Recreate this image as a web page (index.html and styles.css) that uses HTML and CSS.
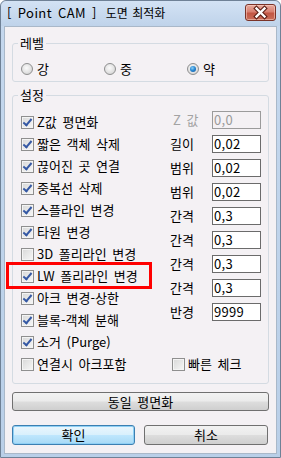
FILE: index.html
```html
<!DOCTYPE html>
<html lang="ko">
<head>
<meta charset="utf-8">
<title>도면 최적화</title>
<link rel="stylesheet" href="styles.css">
</head>
<body>
<div class="window">
  <div class="titlebar">
    <span class="title"><span class="app">[ Point CAM ]</span><span class="doc">도면 최적화</span></span>
    <span class="close">
      <svg width="31" height="17" viewBox="0 0 31 17">
        <path d="M11.5 4.5 L19.5 12.5 M19.5 4.5 L11.5 12.5" stroke="#5a1d14" stroke-width="4.5" stroke-linecap="square" fill="none"/>
        <path d="M11.5 4.5 L19.5 12.5 M19.5 4.5 L11.5 12.5" stroke="#ffffff" stroke-width="2.4" stroke-linecap="square" fill="none"/>
      </svg>
    </span>
  </div>
  <div class="client">
    <fieldset class="group level">
      <legend>레벨</legend>
      <div class="radios">
        <label class="opt"><span class="rb"></span>강</label>
        <label class="opt"><span class="rb"></span>중</label>
        <label class="opt"><span class="rb on"></span>약</label>
      </div>
    </fieldset>
    <fieldset class="group settings">
      <legend>설정</legend>
      <div class="cols">
        <div class="checks">
          <div class="opt"><span class="cb on"></span>Z값 평면화</div>
          <div class="opt"><span class="cb on"></span>짧은 객체 삭제</div>
          <div class="opt"><span class="cb on"></span>끊어진 곳 연결</div>
          <div class="opt"><span class="cb on"></span>중복선 삭제</div>
          <div class="opt"><span class="cb on"></span>스플라인 변경</div>
          <div class="opt"><span class="cb on"></span>타원 변경</div>
          <div class="opt"><span class="cb"></span>3D 폴리라인 변경</div>
          <div class="opt marked"><span class="cb on"></span>LW 폴리라인 변경<span class="highlight"></span></div>
          <div class="opt"><span class="cb on"></span>아크 변경-상한</div>
          <div class="opt"><span class="cb on"></span>블록-객체 분해</div>
          <div class="opt"><span class="cb on"></span>소거 (Purge)</div>
          <div class="opt"><span class="cb"></span>연결시 아크포함</div>
        </div>
        <div class="fields">
          <div class="field disabled"><span class="lbl">Z 값</span><span class="box">0,0</span></div>
          <div class="field"><span class="lbl">길이</span><span class="box">0,02</span></div>
          <div class="field"><span class="lbl">범위</span><span class="box">0,02</span></div>
          <div class="field"><span class="lbl">범위</span><span class="box">0,02</span></div>
          <div class="field"><span class="lbl">간격</span><span class="box">0,3</span></div>
          <div class="field"><span class="lbl">간격</span><span class="box">0,3</span></div>
          <div class="field"><span class="lbl">간격</span><span class="box">0,3</span></div>
          <div class="field"><span class="lbl">간격</span><span class="box">0,3</span></div>
          <div class="field"><span class="lbl">반경</span><span class="box">9999</span></div>
          <div class="opt quick"><span class="cb"></span>빠른 체크</div>
        </div>
      </div>
    </fieldset>
    <div class="btn wide">동일 평면화</div>
    <div class="actions">
      <div class="btn default">확인</div>
      <div class="btn">취소</div>
    </div>
  </div>
</div>
</body>
</html>
```
FILE: styles.css
```css
* { box-sizing: border-box; }
html, body { margin: 0; padding: 0; }
body {
  width: 281px;
  height: 458px;
  overflow: hidden;
  font-family: "Noto Sans CJK KR", "Noto Sans", sans-serif;
  font-size: 13px;
  word-spacing: 2px;
  color: #000;
  background: #fff;
}
.window {
  width: 281px;
  height: 458px;
  display: flex;
  flex-direction: column;
  background: linear-gradient(#c5d8ee, #b9cfe8);
  border: 1px solid #6f8196;
  border-radius: 6px 6px 0 0;
}
.titlebar {
  height: 25px;
  display: flex;
  align-items: center;
  justify-content: space-between;
  padding: 0 4px 0 6px;
  background: linear-gradient(#d3e2f4, #bfd3ea);
  border-radius: 6px 6px 0 0;
}
.title {
  display: flex;
  gap: 9px;
  font-size: 13px;
  line-height: 16px;
  margin-top: -1px;
  white-space: nowrap;
}
.title .app { letter-spacing: 0.4px; word-spacing: 2px; }
.title .doc { font-size: 12px; letter-spacing: 0; word-spacing: 1px; }
.close {
  width: 31px;
  height: 17px;
  margin-top: -3px;
  border: 1px solid #7a3328;
  border-radius: 3px;
  background: linear-gradient(#e7a99c 0%, #d88071 45%, #c25644 55%, #c96e5a 100%);
  display: flex;
  box-shadow: inset 0 0 0 1px rgba(255,220,210,0.5);
}
.close svg { display: block; margin: -1px; }
.client {
  flex: 1;
  margin: 0 3px 3px 3px;
  background: #f4f1f4;
  border: 1px solid #a9b8c9;
  display: flex;
  flex-direction: column;
  padding: 9px 7px 0 7px;
}
.group {
  margin: 0;
  border: 1px solid #d4dbe2;
  border-radius: 3px;
  min-width: 0;
}
.group legend {
  padding: 0 2px;
  margin-left: -3px;
  line-height: 14px;
  font-size: 13px;
}
.level { padding: 12px 8px 5px 8px; }
.radios {
  display: grid;
  grid-template-columns: 83px 83px 1fr;
}
.opt {
  display: flex;
  align-items: center;
  gap: 3px;
  white-space: nowrap;
  line-height: 14px;
}
.rb {
  width: 12px;
  height: 12px;
  border-radius: 50%;
  border: 1px solid #8e8f8f;
  background: radial-gradient(circle at 45% 40%, #fbfbfb 0%, #e2e2e2 55%, #c9c9c9 100%);
  position: relative;
  flex: none;
  margin-right: 1px;
}
.rb.on::after {
  content: "";
  position: absolute;
  left: 2px;
  top: 2px;
  width: 6px;
  height: 6px;
  border-radius: 50%;
  background: radial-gradient(circle at 40% 35%, #8fd0f5 0%, #2a8ad4 45%, #0d4f9a 100%);
}
.settings {
  margin-top: 6px;
  padding: 9px 8px 8px 8px;
}
.cols {
  display: grid;
  grid-template-columns: 148px 1fr;
}
.checks { display: flex; flex-direction: column; }
.checks .opt { height: 22px; }
.cb {
  width: 13px;
  height: 13px;
  flex: none;
  border: 1px solid #8f8f8f;
  background: linear-gradient(135deg, #d8d8d8, #f7f7f7);
  box-shadow: inset 0 0 0 1px #f4f4f4;
  position: relative;
}
.cb.on::after {
  content: "";
  position: absolute;
  left: 3px;
  top: 0px;
  width: 3px;
  height: 7px;
  border: solid #3558a4;
  border-width: 0 2px 2px 0;
  transform: rotate(40deg);
}
.marked { position: relative; }
.highlight {
  position: absolute;
  left: -15px;
  top: -3px;
  width: 146px;
  height: 27px;
  border: 3px solid #ff0000;
}
.fields {
  display: flex;
  flex-direction: column;
  margin-top: -3px;
}
.field {
  height: 24px;
  display: flex;
  align-items: center;
}
.lbl {
  width: 43px;
  padding-left: 1px;
  line-height: 14px;
}
.box {
  width: 49px;
  height: 18px;
  border: 1px solid #6b6b6b;
  background: #fff;
  font-size: 13px;
  line-height: 16px;
  padding-left: 1px;
  letter-spacing: 0.3px;
}
.field.disabled .lbl { color: #a3a3a3; padding-left: 4px; }
.field.disabled .box { background: #f4f1f4; border-color: #9b9b9b; color: #9a9a9a; }
.quick { margin-top: auto; height: 22px; padding-left: 3px; }
.btn {
  height: 19px;
  border: 1px solid #707070;
  border-radius: 3px;
  background: linear-gradient(#f2f2f2 0%, #ebebeb 48%, #dddddd 52%, #cfcfcf 100%);
  display: flex;
  align-items: center;
  justify-content: center;
  font-size: 13px;
  line-height: 14px;
}
.wide { margin-top: 8px; }
.actions {
  margin-top: 14px;
  display: grid;
  grid-template-columns: 123px 124px;
  justify-content: space-between;
  padding-right: 1px;
}
.actions .btn { height: 20px; }
.btn.default {
  border-color: #3c7fb1;
  background: linear-gradient(#eaf6fd 0%, #d9f0fc 48%, #bee6fd 52%, #a7d9f5 100%);
  box-shadow: inset 0 0 0 1px #8fd0f5;
}
```
